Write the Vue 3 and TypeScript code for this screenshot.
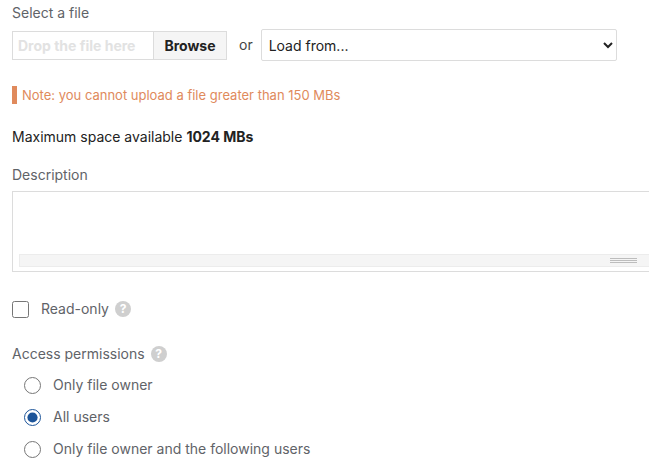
<script setup lang="ts">
import { ref } from 'vue'

const access = ref('all')
const readOnly = ref(false)
const source = ref('')

const accessOptions = [
  { value: 'owner', label: 'Only file owner' },
  { value: 'all', label: 'All users' },
  { value: 'list', label: 'Only file owner and the following users' },
]
</script>

<template>
  <form class="upload-form" @submit.prevent>
    <label class="field-label first">Select a file</label>
    <div class="file-row">
      <div class="drop-box">
        <span class="drop-hint">Drop the file here</span>
        <button type="button" class="browse">Browse</button>
      </div>
      <span class="or">or</span>
      <select v-model="source" class="load-select">
        <option value="">Load from...</option>
      </select>
    </div>

    <p class="note">Note: you cannot upload a file greater than 150 MBs</p>

    <p class="space">Maximum space available <strong>1024 MBs</strong></p>

    <label class="field-label desc-label">Description</label>
    <div class="editor">
      <div class="editor-bar">
        <span class="grip"></span>
      </div>
    </div>

    <label class="check-row">
      <input v-model="readOnly" type="checkbox" class="check" />
      <span>Read-only</span>
      <span class="help">?</span>
    </label>

    <div class="perm-label">
      <span>Access permissions</span>
      <span class="help">?</span>
    </div>
    <div class="radio-list">
      <label v-for="opt in accessOptions" :key="opt.value" class="radio-row">
        <input v-model="access" type="radio" name="access" :value="opt.value" class="radio" />
        <span>{{ opt.label }}</span>
      </label>
    </div>
  </form>
</template>

<style>
html,
body {
  margin: 0;
  background: #fff;
  overflow: hidden;
}
</style>

<style scoped>
.upload-form {
  width: 649px;
  height: 473px;
  box-sizing: border-box;
  padding: 4px 0 0 12px;
  overflow: hidden;
  font-family: Inter, "Noto Sans", sans-serif;
  font-size: 14px;
  line-height: 18px;
  color: #5f6368;
}

.field-label {
  display: block;
}

.file-row {
  display: flex;
  align-items: center;
  margin-top: 7px;
}

.drop-box {
  display: flex;
  width: 215px;
  height: 29px;
  box-sizing: border-box;
  border: 1px solid #dcdcdc;
}

.drop-hint {
  flex: 1;
  padding-left: 5px;
  font-weight: 700;
  line-height: 27px;
  color: #e2e2e2;
}

.browse {
  width: 73px;
  padding: 0;
  border: 0;
  border-left: 1px solid #dcdcdc;
  background: #f5f5f5;
  font: 700 14px Inter, sans-serif;
  color: #222;
}

.or {
  margin: 0 8px 0 12px;
  color: #444;
}

.load-select {
  width: 356px;
  height: 32px;
  box-sizing: border-box;
  padding: 0 2px 0 3px;
  border: 1px solid #dcdcdc;
  border-radius: 2px;
  background: #fff;
  font: 14px Inter, sans-serif;
  color: #222;
}

.note {
  margin: 25px 0 0;
  padding-left: 5px;
  border-left: 5px solid #e08a5c;
  font-size: 13px;
  color: #e08a5c;
}

.space {
  margin: 24px 0 0;
  font-size: 14px;
  color: #222;
}

.desc-label {
  margin-top: 20px;
}

.editor {
  display: flex;
  align-items: flex-end;
  width: 660px;
  height: 81px;
  margin-top: 7px;
  box-sizing: border-box;
  padding: 0 0 4px 6px;
  border: 1px solid #dcdcdc;
}

.editor-bar {
  display: flex;
  align-items: center;
  flex: 1;
  height: 11px;
  border: 1px solid #ececec;
  background: #f5f5f5;
}

.grip {
  width: 27px;
  height: 5px;
  margin-left: 590px;
  border-top: 1px solid #bdbdbd;
  border-bottom: 1px solid #bdbdbd;
  box-sizing: border-box;
  background: linear-gradient(#bdbdbd, #bdbdbd) center / 100% 1px no-repeat;
}

.check-row {
  display: flex;
  align-items: center;
  margin-top: 28px;
  height: 18px;
}

.check {
  width: 17px;
  height: 17px;
  margin: 0 12px 0 0;
}

.help {
  display: inline-block;
  width: 16px;
  height: 16px;
  margin-left: 6px;
  border-radius: 50%;
  background: #cfcfcf;
  color: #fff;
  font-size: 12px;
  font-weight: 700;
  line-height: 16px;
  text-align: center;
}

.perm-label {
  display: flex;
  align-items: center;
  margin-top: 27px;
  height: 18px;
}

.radio-list {
  display: flex;
  flex-direction: column;
  gap: 14px;
  margin-top: 13px;
  padding-left: 12px;
}

.radio-row {
  display: flex;
  align-items: center;
  height: 18px;
}

.radio {
  width: 17px;
  height: 17px;
  margin: 0 12px 0 0;
  accent-color: #1c5499;
}
</style>
